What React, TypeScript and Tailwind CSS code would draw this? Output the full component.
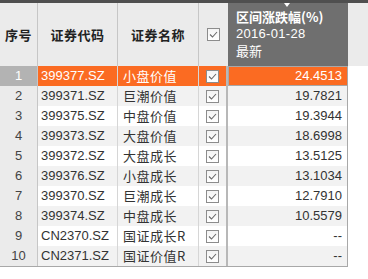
import React from 'react';

interface Row {
  code: string;
  name: string;
  value: string;
}

const rows: Row[] = [
  { code: '399377.SZ', name: '小盘价值', value: '24.4513' },
  { code: '399371.SZ', name: '巨潮价值', value: '19.7821' },
  { code: '399375.SZ', name: '中盘价值', value: '19.3944' },
  { code: '399373.SZ', name: '大盘价值', value: '18.6998' },
  { code: '399372.SZ', name: '大盘成长', value: '13.5125' },
  { code: '399376.SZ', name: '小盘成长', value: '13.1034' },
  { code: '399370.SZ', name: '巨潮成长', value: '12.7910' },
  { code: '399374.SZ', name: '中盘成长', value: '10.5579' },
  { code: 'CN2370.SZ', name: '国证成长R', value: '--' },
  { code: 'CN2371.SZ', name: '国证价值R', value: '--' },
];

const latin = { fontFamily: '"Liberation Sans", Arial, "Noto Sans CJK SC", sans-serif' };
const cjk = { fontFamily: '"Noto Sans CJK SC", "Liberation Sans", sans-serif' };

const Check = () => (
  <div className="w-[13px] h-[13px] border border-[#8c8c8c] bg-gradient-to-b from-[#f4f4f4] to-[#ffffff] flex items-center justify-center">
    <svg width="9" height="7" viewBox="0 0 9 7">
      <polyline points="1,3.5 3.5,6 8,1" fill="none" stroke="#6a6a6a" strokeWidth="1.1" />
    </svg>
  </div>
);

export default function App() {
  return (
    <div className="w-[368px] h-[279px] bg-white overflow-hidden text-[13px] text-[#333]" style={latin}>
      <div className="h-[3px] bg-[#4f4f4f]" />
      {/* Header */}
      <div className="flex h-[63px] bg-[#ebebeb] font-bold text-[#222] tracking-[0.5px]" style={cjk}>
        <div className="w-[38px] flex items-center justify-center border-r border-[#c6c6c6]">序号</div>
        <div className="w-[80px] flex items-center justify-center border-r border-[#c6c6c6]">证券代码</div>
        <div className="w-[81px] flex items-center justify-center border-r border-[#c6c6c6]">证券名称</div>
        <div className="w-[29px] flex items-center justify-center">
          <Check />
        </div>
        <div className="relative w-[120px] bg-[#6f6f6f] text-white pl-[8px] pt-[5px] leading-[17px] font-normal tracking-normal">
          <div className="absolute left-[56px] top-0 w-0 h-0 border-l-[3px] border-r-[3px] border-t-[4px] border-l-transparent border-r-transparent border-t-white" />
          <div className="font-bold">区间涨跌幅(%)</div>
          <div style={latin} className="tracking-[0.3px]">2016-01-28</div>
          <div>最新</div>
        </div>
        <div className="flex-1" />
      </div>
      {/* Body */}
      {rows.map((r, i) => {
        const sel = i === 0;
        const alt = i % 2 === 1;
        const bg = sel ? 'bg-[#fb6b22] text-white' : alt ? 'bg-[#f2f2f2]' : 'bg-white';
        return (
          <div key={r.code} className="flex h-[20px]">
            <div
              className={`w-[38px] flex items-center justify-center border-r border-[#c6c6c6] ${
                sel ? 'bg-[#b3b3b3] text-white' : 'bg-[#ebebeb] text-[#444]'
              }`}
            >
              {i + 1}
            </div>
            <div className={`w-[80px] flex items-center pl-[3px] border-r border-[#d6d6d6] ${bg}`}>{r.code}</div>
            <div className={`w-[81px] flex items-center pl-[5px] border-r border-[#d6d6d6] tracking-[0.5px] ${bg}`} style={cjk}>
              {r.name}
            </div>
            <div className={`w-[29px] flex items-center justify-center border-r-2 border-[#b8b8b8] ${bg}`}>
              <Check />
            </div>
            <div
              className={`w-[120px] flex items-center justify-end pr-[5px] border-r border-[#a8a8a8] ${
                sel ? 'bg-[#fb6b22] text-white border border-[#6b2a0a]' : bg
              }`}
            >
              {r.value}
            </div>
            <div className="flex-1 bg-white" />
          </div>
        );
      })}
      <div className="w-[348px] h-px bg-[#a8a8a8]" />
    </div>
  );
}
